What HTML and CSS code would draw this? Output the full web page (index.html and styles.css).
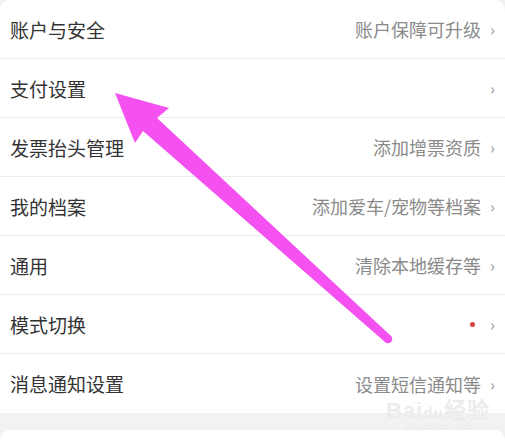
FILE: index.html
```
<!DOCTYPE html>
<html lang="zh-CN">
<head>
    <meta charset="UTF-8">
    <meta name="viewport" content="width=device-width, initial-scale=1.0">
    <title>设置</title>
    <link rel="stylesheet" href="styles.css">
</head>
<body>

    <div class="card">
        <div class="row"><span class="label">账户与安全</span><span class="value">账户保障可升级</span><span class="chevron">›</span></div>
        <div class="row"><span class="label">支付设置</span><span class="value"></span><span class="chevron">›</span></div>
        <div class="row"><span class="label">发票抬头管理</span><span class="value">添加增票资质</span><span class="chevron">›</span></div>
        <div class="row"><span class="label">我的档案</span><span class="value">添加爱车/宠物等档案</span><span class="chevron">›</span></div>
        <div class="row"><span class="label">通用</span><span class="value">清除本地缓存等</span><span class="chevron">›</span></div>
        <div class="row"><span class="label">模式切换</span><span class="value"><span class="dot"></span></span><span class="chevron">›</span></div>
        <div class="row"><span class="label">消息通知设置</span><span class="value">设置短信通知等</span><span class="chevron">›</span></div>
    </div>

    <div class="card next"></div>

    <!-- Pfeil über der Liste -->
    <svg class="arrow" width="505" height="447" viewBox="0 0 505 447">
        <polygon points="115,93 169,108 157,118 391,336 385,342 143,131 135,143" fill="#f550f0"/>
        <circle cx="388" cy="339" r="4.3" fill="#f550f0"/>
    </svg>

    <div class="watermark">
        <span class="wm-big">Bai<span class="wm-du">du</span>经验</span>
        <span class="wm-small">jingyan.baidu.com</span>
    </div>

</body>
</html>
```

FILE: styles.css
```
html, body {
    overflow: hidden;
}

body {
    background-color: #f2f2f2;
    font-family: "Noto Sans CJK SC", "Noto Sans", sans-serif;
    margin: 0;
    padding: 0;
    width: 505px;
    height: 447px;
    position: relative;
}

.card {
    background-color: #ffffff;
    border-radius: 10px 10px 0 0;
    display: flex;
    flex-direction: column;
}

.next {
    margin-top: 17px;
    height: 17px;
}

.row {
    display: flex;
    align-items: center;
    height: 58px;
    padding: 0 9px 0 10px;
    border-bottom: 1px solid #ececec;
}

.row:last-child {
    border-bottom: none;
    height: 59px;
}

.label {
    flex-grow: 1;
    font-size: 19px;
    color: #333333;
}

.value {
    font-size: 18px;
    color: #8a8a8a;
    display: flex;
    align-items: center;
}

.chevron {
    font-size: 16px;
    color: #9a9a9a;
    margin-left: 9px;
    width: 6px;
    line-height: 1;
}

.dot {
    width: 5px;
    height: 5px;
    border-radius: 50%;
    background-color: #d8433c;
    margin-right: 6px;
}

.arrow {
    position: absolute;
    left: 0;
    top: 0;
}

/* Wasserzeichen */
.watermark {
    position: absolute;
    left: 386px;
    top: 392px;
    display: flex;
    flex-direction: column;
    align-items: center;
    color: #ececec;
}

.wm-big {
    font-family: "Liberation Sans", sans-serif;
    font-size: 22px;
    font-weight: bold;
    letter-spacing: 1px;
}

.wm-du {
    font-size: 15px;
}

.wm-small {
    font-family: "Liberation Serif", serif;
    font-size: 9px;
    margin-top: -3px;
}
```
